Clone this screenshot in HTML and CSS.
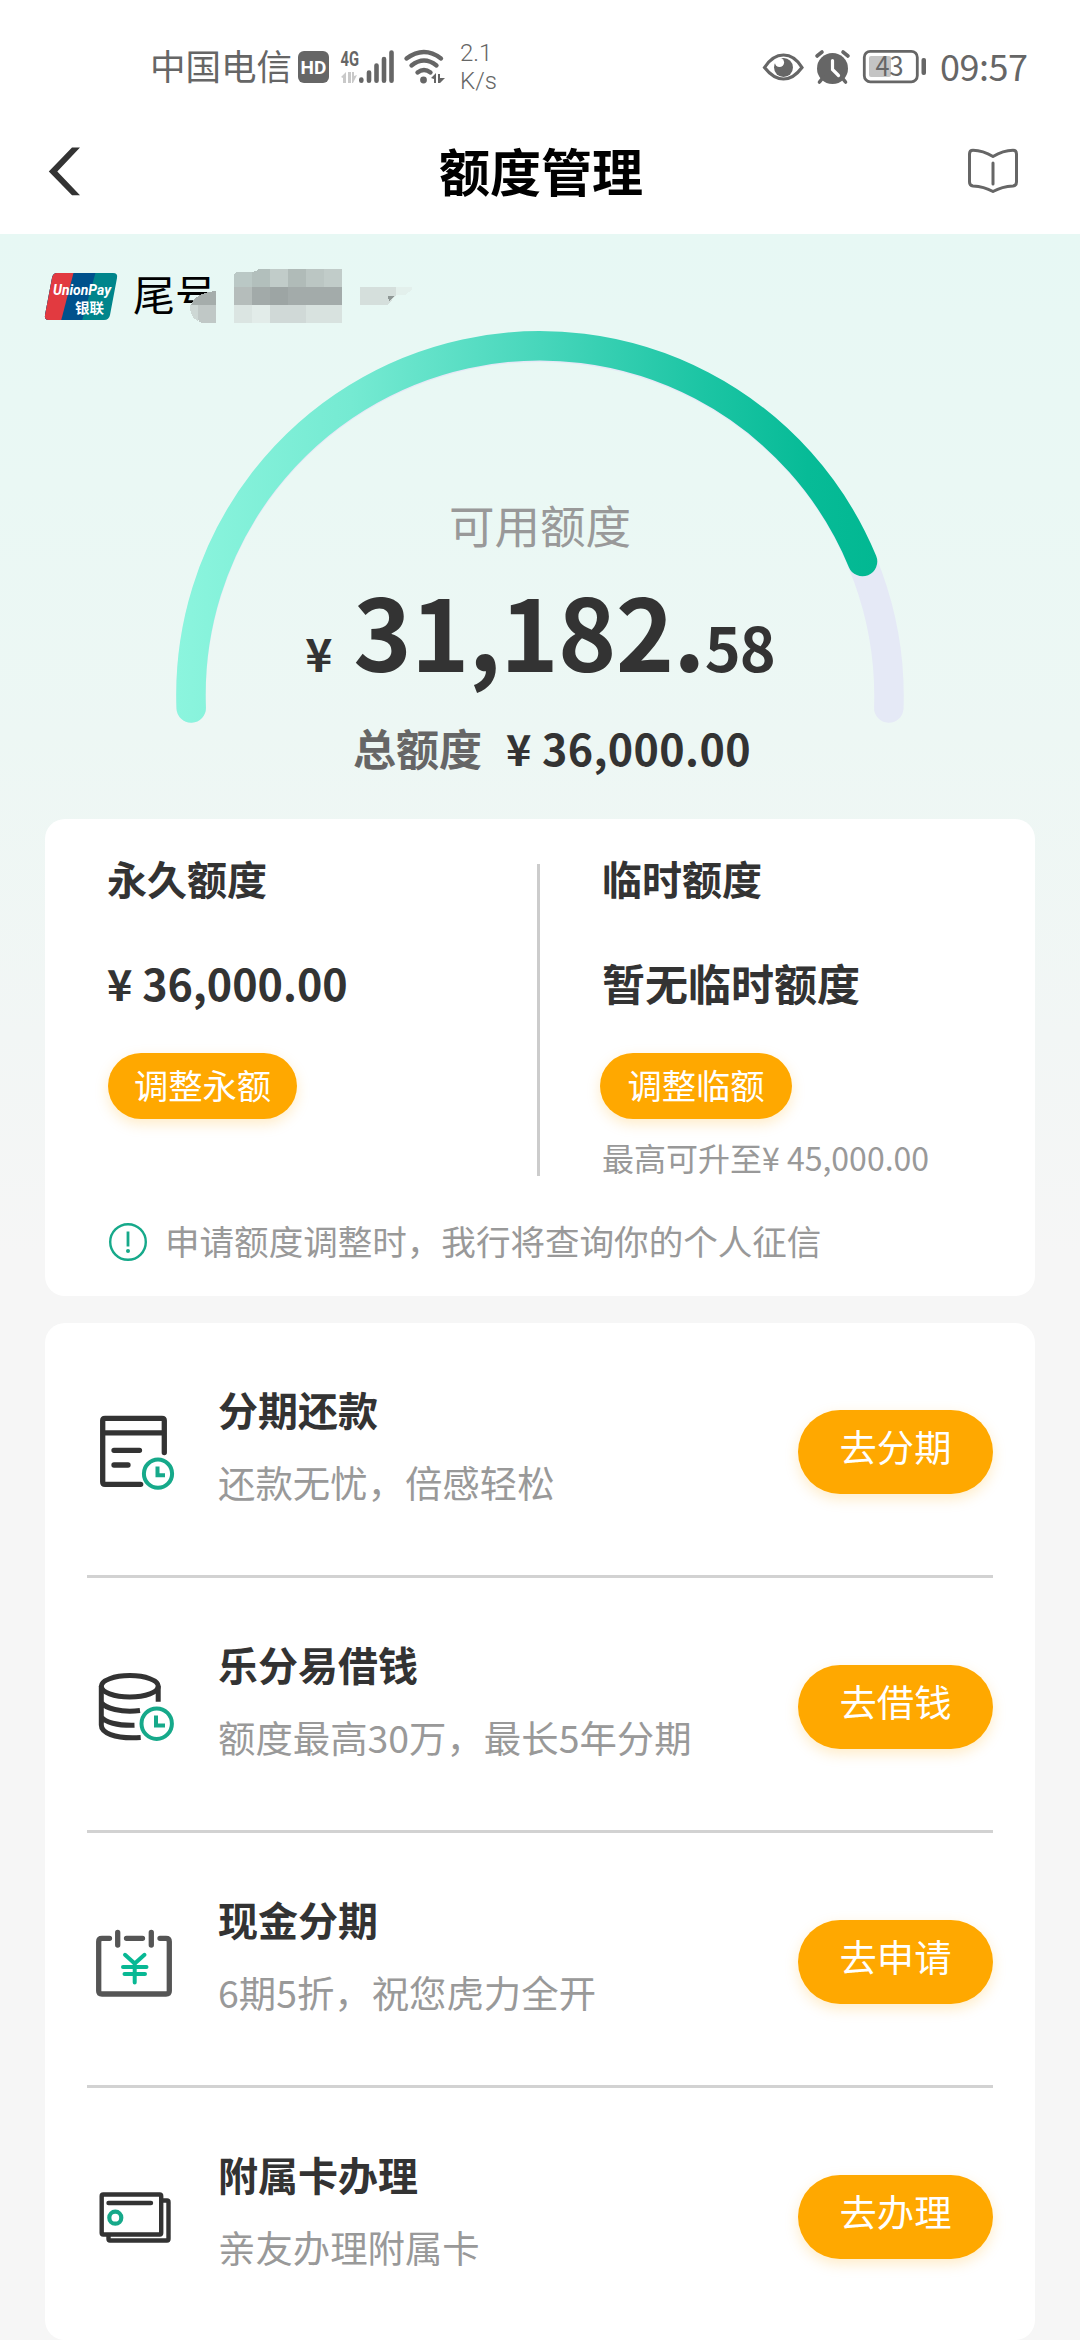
FILE: index.html
```html
<!DOCTYPE html>
<html lang="zh-CN">
<head>
<meta charset="utf-8">
<title>额度管理</title>
<link rel="stylesheet" href="styles.css">
</head>
<body>
<header class="top">
  <div class="status">
    <span class="carrier">中国电信</span>
    <span class="hd">HD</span>
    <svg class="signal" width="58" height="38" viewBox="338 47 58 38">
      <text x="340.500" y="64.500" class="net" textLength="18.500" lengthAdjust="spacingAndGlyphs">4G</text>
      <g fill="#c9c9c9"><path d="M341 76l5-5v11h-3v-5zM348 71h3v11h-3zM352 71h2v4l3-1-4 8h-1z"/></g>
      <g stroke="#666" stroke-width="4.600" stroke-linecap="round"><path d="M361.300 78.500v1.200M369 71.500v8.200M376.500 64.500v15.200M384 58v21.700M391.500 51.500v28.200"/></g>
    </svg>
    <svg class="wifi" width="42" height="36" viewBox="404 48 42 36">
      <g fill="none" stroke="#666" stroke-width="4.400" stroke-linecap="round"><path d="M406.500 57.500Q424 44.500 441 57.500M411.500 64.500Q424 54.500 436.500 64.500M417.500 71.500Q424 66.500 430.500 71.500"/></g>
      <circle cx="423.500" cy="79" r="3.400" fill="#666"/>
      <path fill="#666" d="M431 77l5-5v10h-2v-4zM438 73h2v4h5l-5 5h-2z"/>
    </svg>
    <span class="speed">2.1<br>K/s</span>
    <svg class="eye" width="42" height="30" viewBox="761.500 52 42 30">
      <path d="M764 67.500Q772 55 783 55T801.500 67.500Q793 79 783 79T764 67.500Z" fill="none" stroke="#666" stroke-width="3.200"/>
      <circle cx="783" cy="67.500" r="9.500" fill="#666"/><circle cx="779" cy="62.500" r="4.600" fill="#fff"/>
    </svg>
    <svg class="alarm" width="37" height="36" viewBox="814 48 37 36">
      <circle cx="832.500" cy="67.500" r="15.500" fill="#666"/>
      <path d="M817 55l5-4M848 55l-5-4M819.500 81l4-5M845.500 81l-4-5" stroke="#666" stroke-width="3.600" stroke-linecap="round"/>
      <path d="M832.500 59.500v9l6 6" fill="none" stroke="#fff" stroke-width="3.200" stroke-linecap="round"/>
    </svg>
    <svg class="battery" width="64" height="36" viewBox="863 49 64 36">
      <rect x="864.300" y="51.300" width="53" height="30.500" rx="6" fill="none" stroke="#666" stroke-width="2.800"/>
      <rect x="869" y="56" width="22" height="21" rx="2" fill="#c4c4c4"/>
      <rect x="921.500" y="58" width="4.500" height="17" rx="2" fill="#666"/>
      <text x="875.500" y="76" class="pct" textLength="28" lengthAdjust="spacingAndGlyphs">43</text>
    </svg>
    <span class="clock">09:57</span>
  </div>
  <nav class="nav">
    <svg width="36" height="50" viewBox="47 146 36 50"><path d="M72 146.500h8L57.300 170.500 80 194.300h-8L48.800 170.500z" fill="#333"/></svg>
    <h1>额度管理</h1>
    <svg width="54" height="50" viewBox="966 147 54 50" fill="none" stroke="#666" stroke-width="3" stroke-linecap="round" stroke-linejoin="round">
      <path d="M993 156.500Q983 150.500 973 150.300Q969.500 150.300 969.500 154V182Q969.500 185.500 973 186Q984 186.500 993 191.500Q1002 186.500 1013 186Q1016.500 185.500 1016.500 182V154Q1016.500 150.300 1013 150.300Q1003 150.500 993 156.500ZM993 163v21"/>
    </svg>
  </nav>
</header>

<main class="page">
  <section class="hero">
    <svg class="gauge" viewBox="0 234 1080 585">
      <defs><linearGradient id="g" gradientUnits="userSpaceOnUse" x1="176" y1="0" x2="878" y2="0">
        <stop offset="0" stop-color="#8cf5de"/><stop offset=".25" stop-color="#75ead2"/><stop offset=".52" stop-color="#47d6bb"/><stop offset=".75" stop-color="#1cc5a4"/><stop offset=".9" stop-color="#07bb97"/><stop offset="1" stop-color="#02b892"/>
      </linearGradient></defs>
      <g fill="none" stroke-width="29.500" stroke-linecap="round">
        <path d="M191.200 708A349 349 0 1 1 888.800 708" stroke="#e5e9f6"/>
        <path d="M191.200 708A349 349 0 0 1 862.500 561.500" stroke="url(#g)"/>
      </g>
    </svg>
    <div class="hero-body">
      <div class="card-no">
        <svg width="74" height="50" viewBox="44 271 74 50">
          <defs><clipPath id="u"><path d="M57 273h56q5 0 4 5l-7 37q-1 5-6 5H49q-5 0-4-5l7-37q1-5 5-5z"/></clipPath></defs>
          <g clip-path="url(#u)"><path d="M44 271h74v50H44z" fill="#00858b"/><path d="M44 271h52l-14 50H44z" fill="#00518c"/><path d="M44 271h30l-13 50H44z" fill="#e23a40"/></g>
          <text x="53" y="295" class="up" textLength="58" lengthAdjust="spacingAndGlyphs">UnionPay</text>
          <text x="75" y="312.500" class="upc" textLength="29" lengthAdjust="spacingAndGlyphs">银联</text>
        </svg>
        <span class="tail">尾号</span>
        <svg class="mosaic" width="224" height="56" viewBox="188 269 224 56" shape-rendering="crispEdges">
          <path d="M191 306q4-12 25-14v14z" fill="#a5adab"/><path d="M190 306h8v16q-8-3-8-16z" fill="#cdd7d4"/><path d="M198 306h18v18h-12q-6 0-6-5z" fill="#c0c8c6"/>
          <path d="M234 288v-11q0-4 5-4h13v15z" fill="#bac8c5"/><path d="M252 273q3 0 7-3h11v18h-18z" fill="#b2bfbc"/><path d="M270 270h18v18h-18z" fill="#c1ccc9"/><path d="M288 270h18v18h-18z" fill="#b0bbb8"/><path d="M306 270h18v18h-18z" fill="#bbc6c3"/><path d="M324 270h18v18h-18z" fill="#c1ccc9"/>
          <path d="M234 288h18v18h-18z" fill="#b5bdbb"/><path d="M252 288h18v18h-18z" fill="#a2aaa9"/><path d="M270 288h18v18h-18z" fill="#9da5a4"/><path d="M288 288h54v18h-54z" fill="#a3abaa"/>
          <path d="M234 306h18v18h-18z" fill="#dbe5e2"/><path d="M252 306h18v18h-18z" fill="#e2ece9"/><path d="M270 306h36v18h-36z" fill="#d0d9d7"/><path d="M306 306h36v18h-36z" fill="#d8e2df"/>
          <path d="M360 288h36v8l-8 10h-28z" fill="#d5dfdc"/><path d="M396 288h16v3l-7 5h-9z" fill="#e3f0ec"/><path d="M388 297h6l-5 6z" fill="#8f9896"/>
        </svg>
      </div>
      <div class="label">可用额度</div>
      <div class="amount"><span class="cur">¥</span><span class="int">31,182.</span><span class="dec">58</span></div>
      <div class="total"><span class="total-name">总额度</span><span class="total-num">¥ 36,000.00</span></div>
    </div>
  </section>

  <section class="card limits">
    <div class="cols">
      <div class="col">
        <h2>永久额度</h2>
        <div class="value">¥ 36,000.00</div>
        <button class="pill small">调整永额</button>
      </div>
      <div class="divider"></div>
      <div class="col">
        <h2>临时额度</h2>
        <div class="value">暂无临时额度</div>
        <button class="pill small wide">调整临额</button>
        <div class="note">最高可升至<span>¥ 45,000.00</span></div>
      </div>
    </div>
    <div class="tip">
      <svg width="40" height="40" viewBox="0 0 40 40"><circle cx="20" cy="20" r="17.800" fill="none" stroke="#16a98a" stroke-width="2.400"/><path d="M20 9.500v15" stroke="#16a98a" stroke-width="2.800"/><circle cx="20" cy="29" r="2" fill="#16a98a"/></svg>
      <span>申请额度调整时，我行将查询你的个人征信</span>
    </div>
  </section>

  <section class="card services">
    <article class="row">
      <svg class="ico" viewBox="0 0 90 90">
        <g class="dark"><path d="M47.700 74.300H12Q9.700 74.300 9.700 72V10.600Q9.700 8.300 12 8.300H69Q71.300 8.300 71.300 10.600V42.500M9.700 22.800H71M21 40.300H46.500M21 55H35"/></g>
        <g class="green"><circle cx="65" cy="63.700" r="14.100"/><path d="M64.500 56.500V65.300H72"/></g>
      </svg>
      <div class="txt"><h3>分期还款</h3><p>还款无忧，倍感轻松</p></div>
      <button class="pill">去分期</button>
    </article>
    <article class="row">
      <svg class="ico" viewBox="0 0 90 90">
        <g class="dark flat"><ellipse cx="36.800" cy="21.300" rx="28.500" ry="10.700"/><path d="M8.300 21.300V60C8.300 67 20 74.300 47.700 72.500M65.200 21.300V36.700M8.300 37.500C12 43 28 48 47 45.500M8.300 52C12 57 24 60.800 41.500 60.300"/></g>
        <g class="green"><circle cx="63.700" cy="58.700" r="15.200"/><path d="M63 50.500V60.500H72"/></g>
      </svg>
      <div class="txt"><h3>乐分易借钱</h3><p>额度最高30万，最长5年分期</p></div>
      <button class="pill">去借钱</button>
    </article>
    <article class="row">
      <svg class="ico" viewBox="0 0 90 90">
        <g class="dark mid"><path d="M16.500 18.300H9Q5.700 18.300 5.700 21.500V71Q5.700 74 9 74H73Q76.300 74 76.300 71V21.500Q76.300 18.300 73 18.300H67M33.500 18.300H49.500M24.700 12.500V25M58.300 12.500V25"/></g>
        <g class="green yen"><path d="M32 34.800L41.700 43.500 51.500 34.800M41.700 43.500V62.500M30 47H53.500M31.500 54H52"/></g>
      </svg>
      <div class="txt"><h3>现金分期</h3><p>6期5折，祝您虎力全开</p></div>
      <button class="pill">去申请</button>
    </article>
    <article class="row">
      <svg class="ico" viewBox="0 0 90 90">
        <g class="dark thin"><rect x="8.700" y="19.500" width="59.500" height="40" rx="1.500"/><path d="M70 25.500H74Q75.500 25.500 75.500 27V64Q75.500 65.500 74 65.500H17Q15.500 65.500 15.500 64V61M15.500 28H58"/></g>
        <circle cx="22.300" cy="42.700" r="6" fill="none" stroke="#16a98a" stroke-width="4.200"/>
      </svg>
      <div class="txt"><h3>附属卡办理</h3><p>亲友办理附属卡</p></div>
      <button class="pill">去办理</button>
    </article>
  </section>
</main>
</body>
</html>
```

FILE: styles.css
```css
* { box-sizing: border-box; margin: 0; padding: 0; }
body {
  width: 1080px;
  height: 2340px;
  overflow: hidden;
  background: #f6f6f6;
  color: #333;
  font-family: "Noto Sans CJK SC", sans-serif;
}
svg { display: block; flex: none; overflow: visible; }
h1, h2, h3 { font-weight: 700; }

/* status bar and navigation */
.top { height: 234px; background: #fff; }
.status {
  display: flex;
  align-items: center;
  height: 110px;
  padding: 24px 0 0 150px;
  color: #666;
}
.carrier { width: 142px; font-size: 35.500px; line-height: 44px; padding-bottom: 4px; white-space: nowrap; }
.hd {
  width: 31px;
  height: 32px;
  margin-left: 6px;
  border-radius: 6px;
  background: #666;
  color: #fff;
  font: 700 19px/33px Roboto, sans-serif;
  text-align: center;
}
.signal { margin-left: 9px; }
.net { font: 700 21px Roboto, sans-serif; fill: #666; }
.wifi { margin-left: 8px; }
.speed { width: 60px; margin-left: 14px; font: 300 24px/28px Roboto, sans-serif; }
.eye { margin-left: 242px; }
.alarm { margin-left: 10px; }
.battery { margin-left: 12px; }
.pct { font: 400 27px "Noto Sans CJK SC", sans-serif; fill: #666; }
.clock { margin-left: 13px; padding-bottom: 4px; font-size: 36px; line-height: 44px; letter-spacing: -.5px; }
.nav {
  display: flex;
  align-items: center;
  justify-content: space-between;
  height: 124px;
  padding: 0 60px 0 47px;
}
.nav h1 { font-size: 51px; line-height: 70px; padding-bottom: 5px; color: #000; padding-left: 33px; }

/* gauge */
.page {
  height: 2106px;
  background: linear-gradient(#e7f8f4 0, #eaf8f4 250px, #edf7f4 500px, #f2f6f5 800px, #f6f6f6 1020px);
}
.hero { display: grid; height: 585px; }
.gauge, .hero-body { grid-area: 1 / 1; }
.gauge { width: 1080px; height: 585px; }
.hero-body { display: flex; flex-direction: column; padding-top: 37px; }
.card-no { display: flex; align-items: center; height: 50px; padding-left: 44px; }
.tail { width: 88px; margin-left: 15px; font-size: 42px; line-height: 50px; padding-bottom: 6px; color: #000; white-space: nowrap; }
.mosaic { margin-left: -33px; }
.up { font: italic 700 15px Roboto, sans-serif; fill: #fff; }
.upc { font: 700 13.500px "Noto Sans CJK SC", sans-serif; fill: #fff; }
.label { margin-top: 173px; font-size: 45.500px; line-height: 60px; color: #999; text-align: center; }
.amount {
  display: flex;
  align-items: baseline;
  justify-content: center;
  height: 100px;
  margin-top: 25px;
  font-weight: 700;
}
.cur { font-size: 46px; line-height: 50px; margin-right: 21px; }
.int { font-size: 99px; line-height: 100px; letter-spacing: -.7px; }
.dec { font-size: 61px; line-height: 62px; letter-spacing: -1px; }
.total { display: flex; justify-content: center; margin-top: 38px; padding-left: 24px; font-size: 43px; line-height: 60px; font-weight: 700; }
.total-name { color: #666; margin-right: 24px; }
.total-num { letter-spacing: .4px; }

/* cards */
.card { width: 990px; margin: 0 auto; border-radius: 20px; background: #fff; }
.limits { height: 477px; }
.cols { display: grid; grid-template-columns: 492px 3px 1fr; height: 360px; }
.col { display: flex; flex-direction: column; align-items: flex-start; padding: 34px 0 0 62px; }
.divider { margin: 45px 0 3px; background: #ccc; }
.col h2 { font-size: 40px; line-height: 50px; }
.value { margin-top: 49px; font-size: 43px; line-height: 60px; font-weight: 700; white-space: nowrap; }
.pill {
  width: 195px;
  height: 84px;
  border: 0;
  border-radius: 42px;
  background: #ffa800;
  box-shadow: 0 5px 14px rgba(255, 168, 0, .22);
  color: #fff;
  font: 400 37.300px/50px "Noto Sans CJK SC", sans-serif;
  padding-bottom: 12px;
}
.small { width: 189px; height: 66px; margin: 41px 0 0 1px; padding-bottom: 4px; border-radius: 33px; font-size: 34.300px; line-height: 44px; }
.wide { width: 192px; margin-left: -2px; }
.note { margin-top: 16px; font-size: 32px; line-height: 44px; color: #999; white-space: nowrap; }
.tip { display: flex; align-items: center; margin-top: 41px; padding-left: 63px; height: 44px; color: #999; font-size: 34.550px; line-height: 44px; white-space: nowrap; }
.tip span { margin-left: 17px; padding-bottom: 4px; }

/* services */
.services { margin-top: 27px; height: 1017px; padding: 0 42px; }
.row { display: flex; align-items: flex-start; height: 255px; border-bottom: 3px solid #d2d2d2; }
.row:last-child { border-bottom: 0; }
.ico { width: 90px; height: 90px; margin: 87px 0 0 6px; }
.txt { flex: 1; margin-left: 35px; padding-top: 61px; }
.txt h3 { font-size: 40px; line-height: 50px; }
.txt p { margin-top: 23px; font-size: 37.400px; line-height: 50px; color: #999; white-space: nowrap; }
.row .pill { margin-top: 87px; }
.dark { fill: none; stroke: #333; stroke-width: 5.300; stroke-linecap: round; stroke-linejoin: round; }
.flat { stroke-width: 5; stroke-linecap: butt; }
.mid { stroke: #555; }
.thin { stroke-width: 4.400; }
.green { fill: none; stroke: #16a98a; stroke-width: 4; }
.yen { stroke: #08b894; stroke-linecap: round; }
```
